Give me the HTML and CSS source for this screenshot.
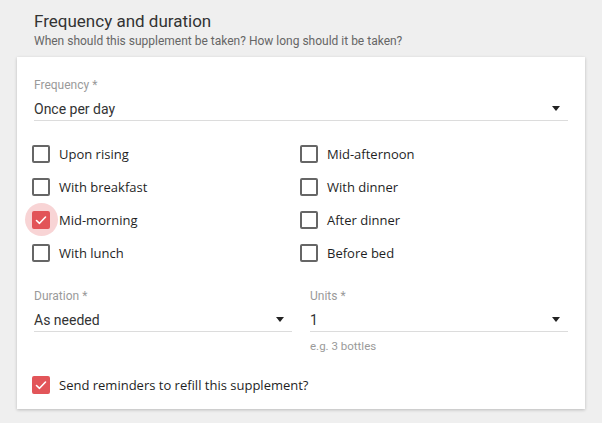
FILE: index.html
```html
<!DOCTYPE html>
<html>
<head>
<meta charset="utf-8">
<link rel="stylesheet" href="styles.css">
</head>
<body>
<div class="header">
  <div class="title">Frequency and duration</div>
  <div class="subtitle">When should this supplement be taken? How long should it be taken?</div>
</div>
<div class="card">
  <div class="field">
    <div class="field-label">Frequency *</div>
    <div class="select"><span>Once per day</span><span class="arrow"></span></div>
  </div>
  <div class="checks">
    <label class="check"><span class="box"></span><span class="text">Upon rising</span></label>
    <label class="check"><span class="box"></span><span class="text">Mid-afternoon</span></label>
    <label class="check"><span class="box"></span><span class="text">With breakfast</span></label>
    <label class="check"><span class="box"></span><span class="text">With dinner</span></label>
    <label class="check"><span class="box checked focus"><svg viewBox="0 0 18 18" class="tick"><polyline points="4.5,9.5 7.5,12.3 13.5,6" /></svg></span><span class="text">Mid-morning</span></label>
    <label class="check"><span class="box"></span><span class="text">After dinner</span></label>
    <label class="check"><span class="box"></span><span class="text">With lunch</span></label>
    <label class="check"><span class="box"></span><span class="text">Before bed</span></label>
  </div>
  <div class="pair">
    <div class="field">
      <div class="field-label">Duration *</div>
      <div class="select"><span>As needed</span><span class="arrow"></span></div>
    </div>
    <div class="field">
      <div class="field-label">Units *</div>
      <div class="select"><span>1</span><span class="arrow"></span></div>
      <div class="helper">e.g. 3 bottles</div>
    </div>
  </div>
  <label class="check reminder"><span class="box checked"><svg viewBox="0 0 18 18" class="tick"><polyline points="4.5,9.5 7.5,12.3 13.5,6" /></svg></span><span class="text">Send reminders to refill this supplement?</span></label>
</div>
</body>
</html>
```

FILE: styles.css
```css
* { box-sizing: border-box; }
html, body { margin: 0; padding: 0; }
body {
  background: #efefef;
  font-family: Roboto, "Liberation Sans", sans-serif;
  color: #333;
  width: 602px;
  height: 423px;
  overflow: hidden;
}
.header { padding: 11px 0 0 34px; }
.title { font-size: 17px; line-height: 20px; color: #333; }
.subtitle { font-size: 12px; line-height: 16px; color: #666; margin-top: 2px; }
.card {
  margin: 8px 17px 0 17px;
  background: #fff;
  padding: 20px 17px 15px 17px;
  box-shadow: 0 1px 3px rgba(0,0,0,0.22);
}
.field-label { font-size: 12px; line-height: 16px; color: #9a9a9a; }
.select {
  margin-top: 6px;
  display: flex;
  justify-content: space-between;
  align-items: center;
  font-size: 14px;
  line-height: 20px;
  height: 22px;
  padding-bottom: 1px;
  border-bottom: 1px solid #dcdcdc;
  color: #333;
}
.arrow {
  width: 0; height: 0;
  border-left: 4px solid transparent;
  border-right: 4px solid transparent;
  border-top: 5px solid #222;
  margin-right: 8px;
  margin-top: -2px;
}
.checks {
  display: grid;
  grid-template-columns: 1fr 1fr;
  grid-auto-rows: 33px;
  margin: 16px 0 0 -2px;
}
.check {
  display: flex;
  align-items: center;
  gap: 9px;
  font-family: "Open Sans", sans-serif;
  font-weight: 400;
  font-size: 13px;
  color: #1f1f1f;
}
.box {
  position: relative;
  width: 18px; height: 18px;
  border: 2px solid #666;
  border-radius: 2px;
  flex: none;
}
.box.checked { background: #e25559; border-color: #e25559; }
.box.focus::before {
  content: "";
  position: absolute;
  left: -9.5px; top: -9.5px;
  width: 33px; height: 33px;
  border-radius: 50%;
  background: rgba(226, 85, 89, 0.25);
  z-index: 0;
}
.tick {
  position: absolute;
  left: -2px; top: -2px;
  width: 18px; height: 18px;
  z-index: 1;
}
.tick polyline { fill: none; stroke: #fff; stroke-width: 1.6; stroke-linecap: round; stroke-linejoin: round; }
.pair {
  display: grid;
  grid-template-columns: 1fr 1fr;
  column-gap: 18px;
  margin-top: 19px;
}
.helper { font-size: 11.5px; line-height: 16px; color: #9a9a9a; margin-top: 6px; }
.reminder { margin: 22px 0 0 -2px; height: 18px; }
```
